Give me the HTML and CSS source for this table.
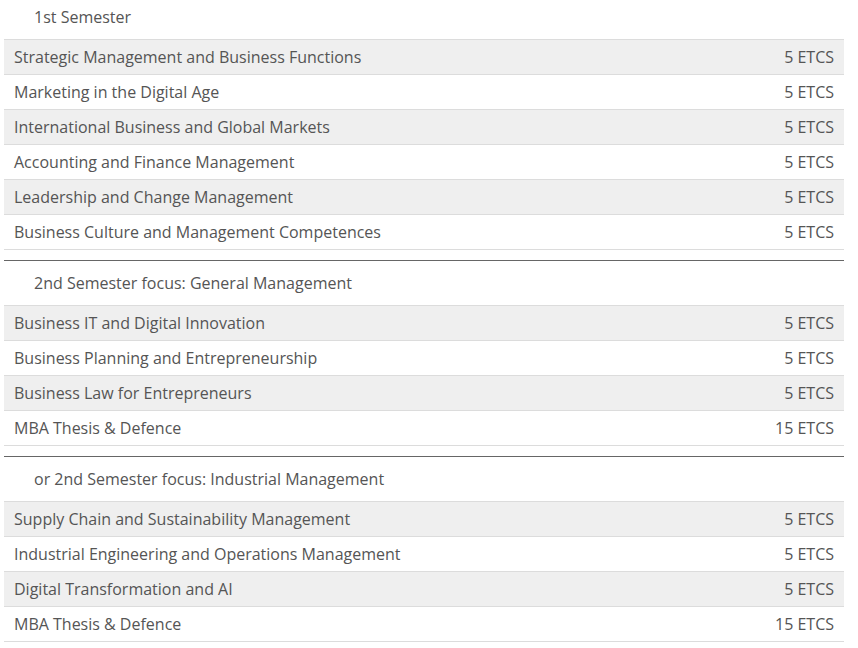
FILE: index.html
```html
<!DOCTYPE html>
<html>
<head>
<meta charset="utf-8">
<link rel="stylesheet" href="styles.css">
</head>
<body>
<div class="wrap">
  <section class="sem sem-first">
    <div class="sem-head">1st Semester</div>
    <div class="row"><span>Strategic Management and Business Functions</span><span>5 ETCS</span></div>
    <div class="row"><span>Marketing in the Digital Age</span><span>5 ETCS</span></div>
    <div class="row"><span>International Business and Global Markets</span><span>5 ETCS</span></div>
    <div class="row"><span>Accounting and Finance Management</span><span>5 ETCS</span></div>
    <div class="row"><span>Leadership and Change Management</span><span>5 ETCS</span></div>
    <div class="row"><span>Business Culture and Management Competences</span><span>5 ETCS</span></div>
  </section>
  <section class="sem">
    <div class="sem-head">2nd Semester focus: General Management</div>
    <div class="row"><span>Business IT and Digital Innovation</span><span>5 ETCS</span></div>
    <div class="row"><span>Business Planning and Entrepreneurship</span><span>5 ETCS</span></div>
    <div class="row"><span>Business Law for Entrepreneurs</span><span>5 ETCS</span></div>
    <div class="row"><span>MBA Thesis &amp; Defence</span><span>15 ETCS</span></div>
  </section>
  <section class="sem">
    <div class="sem-head">or 2nd Semester focus: Industrial Management</div>
    <div class="row"><span>Supply Chain and Sustainability Management</span><span>5 ETCS</span></div>
    <div class="row"><span>Industrial Engineering and Operations Management</span><span>5 ETCS</span></div>
    <div class="row"><span>Digital Transformation and AI</span><span>5 ETCS</span></div>
    <div class="row"><span>MBA Thesis &amp; Defence</span><span>15 ETCS</span></div>
  </section>
</div>
</body>
</html>
```
FILE: styles.css
```css
html, body {
  margin: 0;
  padding: 0;
  background: #fff;
}
body {
  font-family: "Open Sans", "Liberation Sans", sans-serif;
  font-size: 16px;
  color: #555;
}
.wrap {
  width: 840px;
  margin-left: 4px;
}
.sem {
  margin-top: 10px;
  border-top: 1px solid #666;
}
.sem-first {
  margin-top: 0;
  border-top: none;
}
.sem-head {
  padding: 11px 0 11px 30px;
  line-height: 22px;
}
.sem-first .sem-head {
  padding-top: 6px;
}
.row {
  display: flex;
  justify-content: space-between;
  border-top: 1px solid #dcdcdc;
  height: 34px;
  line-height: 34px;
  padding: 0 10px 0 10px;
}
.row:last-child {
  border-bottom: 1px solid #dcdcdc;
}
.row:nth-child(even) {
  background: #efefef;
}
```
